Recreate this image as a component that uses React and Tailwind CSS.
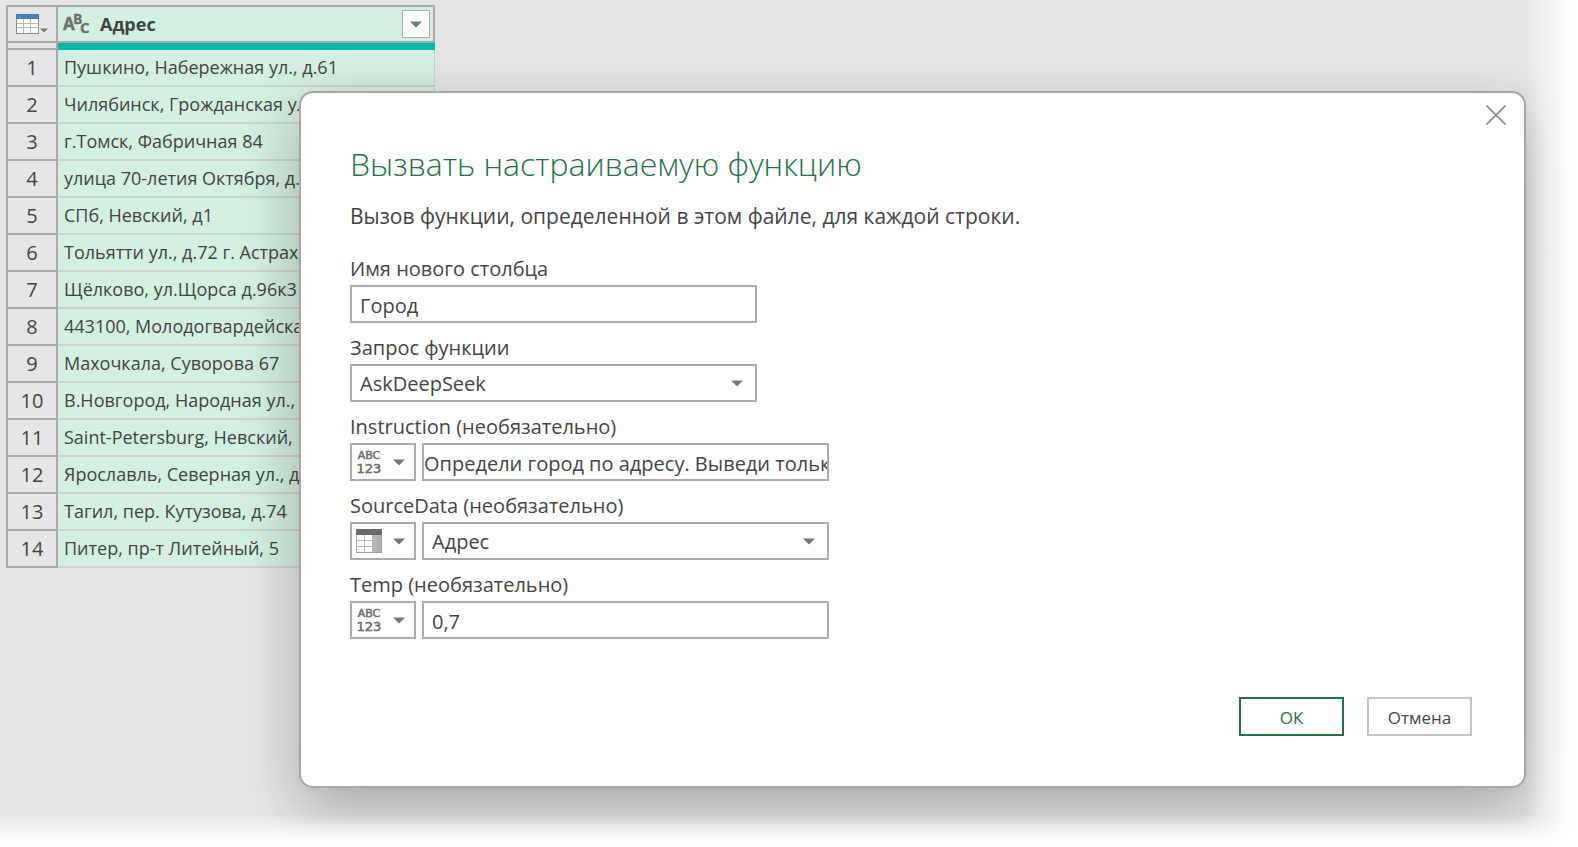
import React from "react";

const addresses = [
  "Пушкино, Набережная ул., д.61",
  "Чилябинск, Грожданская ул., 5",
  "г.Томск, Фабричная 84",
  "улица 70-летия Октября, д.8",
  "СПб, Невский, д1",
  "Тольятти ул., д.72 г. Астрахань",
  "Щёлково, ул.Щорса д.96к3",
  "443100, Молодогвардейская",
  "Махочкала, Суворова 67",
  "В.Новгород, Народная ул., 2",
  "Saint-Petersburg, Невский, 1",
  "Ярославль, Северная ул., д.3",
  "Тагил, пер. Кутузова, д.74",
  "Питер, пр-т Литейный, 5",
];

function Caret({ className = "" }) {
  return (
    <svg aria-hidden="true" width="12" height="7" viewBox="0 0 12 7" className={className}>
      <path d="M0 0.5H12L6 6.5Z" fill="#767676" />
    </svg>
  );
}

function TableIcon() {
  return (
    <svg aria-hidden="true" width="34" height="22" viewBox="0 0 34 22">
      <rect x="0.5" y="1.5" width="22" height="19" fill="#fff" stroke="#8c8c8c" />
      <rect x="0" y="1" width="23" height="5" fill="#4a7ebb" />
      <path d="M1 10.5H22M1 14.5H22M7.5 6V20M14.5 6V20" stroke="#b5b5b5" />
      <path d="M24 15.5H32L28 19.5Z" fill="#767676" />
    </svg>
  );
}

function ColumnIcon() {
  return (
    <svg aria-hidden="true" width="26" height="24" viewBox="0 0 26 24">
      <rect x="0.5" y="0.5" width="25" height="23" fill="#fff" stroke="#a0a0a0" />
      <rect x="17" y="5" width="8" height="18" fill="#b3b3b3" />
      <rect x="0" y="0" width="26" height="6" fill="#6a6a6a" />
      <path d="M1 11.5H17M1 17.5H17M8.5 6V23M16.5 6V23" stroke="#b3b3b3" />
    </svg>
  );
}

function TextTypeIcon() {
  return (
    <svg
      aria-hidden="true"
      width="27"
      height="24"
      viewBox="0 0 27 24"
      fill="#6e6e6e"
      stroke="#6e6e6e"
      strokeWidth="0.3"
      fontFamily="Open Sans, sans-serif"
      className="overflow-visible"
    >
      <text x="0" y="18" fontSize="17">A</text>
      <text x="10" y="12" fontSize="14">B</text>
      <text x="17" y="21" fontSize="15">C</text>
    </svg>
  );
}

function AnyTypeIcon() {
  return (
    <svg
      aria-hidden="true"
      width="26"
      height="24"
      viewBox="0 0 26 24"
      fill="#6a6a6a"
      stroke="#6a6a6a"
      strokeWidth="0.5"
      fontFamily="DejaVu Sans, sans-serif"
      textAnchor="middle"
      className="overflow-visible"
    >
      <text x="13" y="9" fontSize="11">ABC</text>
      <text x="13" y="23" fontSize="13">123</text>
    </svg>
  );
}

function TypePicker({ label, children }) {
  return (
    <button
      type="button"
      aria-label={label}
      aria-haspopup="listbox"
      className="flex h-[38px] w-[66px] shrink-0 items-center justify-between border-2 border-[#ababab] bg-white pr-[9px] pl-1"
    >
      {children}
      <Caret />
    </button>
  );
}

function Field({ id, label, picker, children }) {
  return (
    <div className="flex flex-col">
      <label htmlFor={id} className="h-10 pt-2 text-[20px] leading-8">
        {label}
      </label>
      <div className="flex h-[39px] items-start gap-[6px]">
        {picker}
        {children}
      </div>
    </div>
  );
}

const boxClass =
  "h-[38px] w-[407px] appearance-none rounded-none border-2 border-[#ababab] bg-white pt-[2px] text-[20px] text-[#444] outline-none";

function SelectBox({ id, value }) {
  return (
    <div className="relative flex items-center">
      <select id={id} defaultValue={value} className={boxClass + " pl-2"}>
        <option value={value}>{value}</option>
      </select>
      <Caret className="pointer-events-none absolute right-[14px]" />
    </div>
  );
}

export default function App() {
  return (
    <div className="relative min-h-screen overflow-hidden bg-[#e6e6e6] font-['Open_Sans','Noto_Sans',sans-serif] text-[#444]">
      <main className="pt-[5px] pl-[6px]">
        <table className="w-[429px] table-fixed border-separate border-spacing-0">
          <thead>
            <tr>
              <th className="h-[38px] w-[52px] border-2 border-[#ababab] p-0">
                <button type="button" aria-label="Меню таблицы" className="flex w-full justify-center pl-[2px]">
                  <TableIcon />
                </button>
              </th>
              <th className="h-[38px] border-y-2 border-r-2 border-[#ababab] bg-[#d3f0e0] p-0">
                <div className="flex items-center pr-[3px] pl-[5px]">
                  <TextTypeIcon />
                  <span className="pl-[10px] text-[18px] leading-6 font-bold">Адрес</span>
                  <button
                    type="button"
                    aria-label="Фильтр столбца"
                    className="ml-auto flex size-7 items-center justify-center border border-[#ababab] bg-white"
                  >
                    <Caret />
                  </button>
                </div>
              </th>
            </tr>
            <tr>
              <td className="h-[7px] border-x-2 border-b-2 border-[#ababab] p-0" />
              <td className="h-[7px] bg-[#00b8aa] p-0" />
            </tr>
          </thead>
          <tbody>
            {addresses.map((address, i) => (
              <tr key={address}>
                <th
                  scope="row"
                  className="h-[37px] border-x-2 border-b-2 border-[#ababab] p-0 text-[20px] leading-[35px] font-normal"
                >
                  {i + 1}
                </th>
                <td className="h-[37px] overflow-hidden border-r border-b-2 border-[#d0d0d0] bg-[#d3f0e0] p-0 pl-[6px] text-[18px] leading-[35px] whitespace-nowrap">
                  {address}
                </td>
              </tr>
            ))}
          </tbody>
        </table>
      </main>

      <div className="absolute inset-0 pt-[91px] pr-[52px] pl-[299px]">
        <section
          role="dialog"
          aria-labelledby="dialog-title"
          className="relative rounded-[14px] border-2 border-[#a6a6a6] bg-white px-[49px] pt-[49px] pb-[50px] shadow-[0_22px_60px_rgba(0,0,0,0.28)]"
        >
          <button type="button" aria-label="Закрыть" className="absolute top-3 right-[18px]">
            <svg width="20" height="20" viewBox="0 0 20 20" aria-hidden="true">
              <path d="M0.5 0.5L19.5 19.5M19.5 0.5L0.5 19.5" stroke="#8a8a8a" strokeWidth="1.6" />
            </svg>
          </button>
          <h1 id="dialog-title" className="text-[32px] leading-[44px] font-light text-[#217346]">
            Вызвать настраиваемую функцию
          </h1>
          <p className="pt-[10px] text-[21px] leading-[40px]">
            Вызов функции, определенной в этом файле, для каждой строки.
          </p>
          <form className="pt-[9px]">
            <Field id="column-name" label="Имя нового столбца">
              <input id="column-name" type="text" defaultValue="Город" className={boxClass + " px-2"} />
            </Field>
            <Field id="function-query" label="Запрос функции">
              <SelectBox id="function-query" value="AskDeepSeek" />
            </Field>
            <Field
              id="instruction"
              label="Instruction (необязательно)"
              picker={<TypePicker label="Тип Instruction"><AnyTypeIcon /></TypePicker>}
            >
              <input
                id="instruction"
                type="text"
                defaultValue="Определи город по адресу. Выведи только"
                className={boxClass}
              />
            </Field>
            <Field
              id="source-data"
              label="SourceData (необязательно)"
              picker={<TypePicker label="Тип SourceData"><ColumnIcon /></TypePicker>}
            >
              <SelectBox id="source-data" value="Адрес" />
            </Field>
            <Field
              id="temp"
              label="Temp (необязательно)"
              picker={<TypePicker label="Тип Temp"><AnyTypeIcon /></TypePicker>}
            >
              <input id="temp" type="text" defaultValue="0,7" className={boxClass + " px-2"} />
            </Field>
            <div className="flex justify-end gap-[23px] pt-[57px] pr-[3px]">
              <button type="submit" className="h-[39px] w-[105px] border-2 border-[#217346] bg-white pt-[2px] text-[17px] text-[#217346]">
                ОК
              </button>
              <button type="button" className="h-[39px] w-[105px] border-2 border-[#c6c6c6] bg-white pt-[2px] text-[17px]">
                Отмена
              </button>
            </div>
          </form>
        </section>
      </div>

      <div className="pointer-events-none absolute inset-y-0 right-0 w-[52px] bg-linear-to-r from-white/0 to-white to-85%" />
      <div className="pointer-events-none absolute inset-x-0 bottom-0 h-8 bg-linear-to-b from-white/0 to-white to-85%" />
    </div>
  );
}
